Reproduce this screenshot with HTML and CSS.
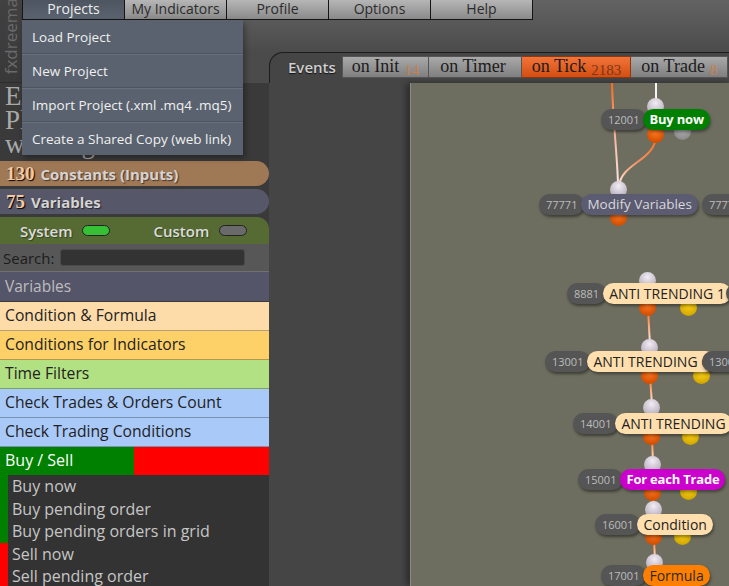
FILE: index.html
```html
<!DOCTYPE html>
<html>
<head>
<meta charset="utf-8">
<link rel="stylesheet" href="styles.css">
</head>
<body>
<div class="app">
  <header class="top">
    <div class="logo"><span>fxdreema</span></div>
    <div class="top-main">
      <nav class="menubar">
        <div class="menu active">Projects</div>
        <div class="menu">My Indicators</div>
        <div class="menu">Profile</div>
        <div class="menu">Options</div>
        <div class="menu">Help</div>
      </nav>
      <div class="tabs">
        <span class="tabs-label">Events</span>
        <div class="tab t-init">on Init<span class="cnt">14</span></div>
        <div class="tab t-timer">on Timer</div>
        <div class="tab tick">on Tick<span class="cnt">2183</span></div>
        <div class="tab t-trade">on Trade<span class="cnt">8</span></div>
      </div>
    </div>
  </header>

  <div class="body">
    <aside class="sidebar">
      <div class="title">Expert Advisor<br>Platform<br>working</div>
      <div class="pill constants"><span class="num">130</span>Constants (Inputs)</div>
      <div class="pill variables"><span class="num">75</span>Variables</div>
      <div class="filter">
        <span class="flabel">System</span><span class="toggle on"></span>
        <span class="flabel custom">Custom</span><span class="toggle"></span>
      </div>
      <div class="search"><span>Search:</span><div class="input"></div></div>
      <div class="section-head">Variables</div>
      <div class="cat c-formula">Condition &amp; Formula</div>
      <div class="cat c-ind">Conditions for Indicators</div>
      <div class="cat c-time">Time Filters</div>
      <div class="cat c-check">Check Trades &amp; Orders Count</div>
      <div class="cat c-check">Check Trading Conditions</div>
      <div class="buysell"><span class="bs-buy">Buy / Sell</span><span class="bs-sell"></span></div>
      <ul class="blocks">
        <li class="buy">Buy now</li>
        <li class="buy">Buy pending order</li>
        <li class="buy">Buy pending orders in grid</li>
        <li class="sell">Sell now</li>
        <li class="sell">Sell pending order</li>
      </ul>
    </aside>

    <main class="workspace">
      <div class="canvas">
        <svg class="links" width="330" height="510" viewBox="0 0 330 510">
          <defs>
            <linearGradient id="g0" gradientUnits="userSpaceOnUse" x1="0" y1="0" x2="0" y2="104"><stop offset="0" stop-color="#ff6a10"/><stop offset="0.35" stop-color="#f7a080"/><stop offset="1" stop-color="#fbecef"/></linearGradient>
            <linearGradient id="g1" gradientUnits="userSpaceOnUse" x1="0" y1="52" x2="0" y2="104"><stop offset="0" stop-color="#ff6a10"/><stop offset="0.5" stop-color="#f59060"/><stop offset="1" stop-color="#fff4f0"/></linearGradient>
            <linearGradient id="g2" gradientUnits="userSpaceOnUse" x1="0" y1="226" x2="0" y2="262"><stop offset="0" stop-color="#ff6a10"/><stop offset="1" stop-color="#fff4f0"/></linearGradient>
            <linearGradient id="g3" gradientUnits="userSpaceOnUse" x1="0" y1="293" x2="0" y2="322"><stop offset="0" stop-color="#ff6a10"/><stop offset="1" stop-color="#fff4f0"/></linearGradient>
            <linearGradient id="g4" gradientUnits="userSpaceOnUse" x1="0" y1="355" x2="0" y2="380"><stop offset="0" stop-color="#ff6a10"/><stop offset="1" stop-color="#fff4f0"/></linearGradient>
            <linearGradient id="g5" gradientUnits="userSpaceOnUse" x1="0" y1="411" x2="0" y2="425"><stop offset="0" stop-color="#ff6a10"/><stop offset="1" stop-color="#fff4f0"/></linearGradient>
            <linearGradient id="g6" gradientUnits="userSpaceOnUse" x1="0" y1="455" x2="0" y2="478"><stop offset="0" stop-color="#ff6a10"/><stop offset="1" stop-color="#fff4f0"/></linearGradient>
          </defs>
          <path d="M245 0 L245 22" stroke="#f6f2f6" stroke-width="2" fill="none"/>
          <path d="M201 0 C202 40 207 80 207 104" stroke="url(#g0)" stroke-width="2" fill="none"/>
          <path d="M245 52 C245 78 209 80 208 104" stroke="url(#g1)" stroke-width="2" fill="none"/>
          <path d="M237 226 L239 262" stroke="url(#g2)" stroke-width="2" fill="none"/>
          <path d="M239 293 L241 322" stroke="url(#g3)" stroke-width="2" fill="none"/>
          <path d="M241 355 L242 380" stroke="url(#g4)" stroke-width="2" fill="none"/>
          <path d="M242 411 L243 425" stroke="url(#g5)" stroke-width="2" fill="none"/>
          <path d="M243 455 L244 478" stroke="url(#g6)" stroke-width="2" fill="none"/>
        </svg>

        <span class="port in" style="left:236px;top:15px"></span>
        <span class="port out" style="left:236px;top:43px"></span>
        <span class="port gray" style="left:263px;top:40px"></span>

        <span class="port in" style="left:199px;top:98px"></span>
        <span class="port out" style="left:199px;top:126px"></span>

        <span class="port in" style="left:228px;top:189px"></span>
        <span class="port out" style="left:228px;top:216px"></span>
        <span class="port yes" style="left:269px;top:216px"></span>

        <span class="port in" style="left:230px;top:256px"></span>
        <span class="port out" style="left:230px;top:284px"></span>
        <span class="port yes" style="left:282px;top:284px"></span>

        <span class="port in" style="left:232px;top:316px"></span>
        <span class="port out" style="left:232px;top:345px"></span>
        <span class="port yes" style="left:271px;top:345px"></span>

        <span class="port in" style="left:233px;top:373px"></span>
        <span class="port out" style="left:233px;top:401px"></span>
        <span class="port yes" style="left:269px;top:400px"></span>

        <span class="port in" style="left:234px;top:418px"></span>
        <span class="port out" style="left:234px;top:445px"></span>
        <span class="port yes" style="left:263px;top:445px"></span>

        <span class="port in" style="left:235px;top:471px"></span>

        <div class="node" style="left:190px;top:26px"><span class="nid">12001</span><span class="nlabel l-buy">Buy now</span></div>
        <div class="node" style="left:128px;top:111px"><span class="nid">77771</span><span class="nlabel l-mod">Modify Variables</span></div>
        <div class="node" style="left:291px;top:111px"><span class="nid">77772</span><span class="nlabel l-mod">Modify Variables</span></div>
        <div class="node" style="left:156px;top:200px"><span class="nid">8881</span><span class="nlabel l-cond">ANTI TRENDING 1</span></div>
        <div class="node" style="left:315px;top:200px"><span class="nid">8882</span><span class="nlabel l-cond">ANTI TRENDING 2</span></div>
        <div class="node" style="left:134px;top:268px"><span class="nid">13001</span><span class="nlabel l-cond">ANTI TRENDING C</span></div>
        <div class="node" style="left:291px;top:268px"><span class="nid">13002</span><span class="nlabel l-cond">ANTI TRENDING</span></div>
        <div class="node" style="left:162px;top:330px"><span class="nid">14001</span><span class="nlabel l-cond">ANTI TRENDING</span></div>
        <div class="node" style="left:167px;top:386px"><span class="nid">15001</span><span class="nlabel l-each">For each Trade</span></div>
        <div class="node" style="left:184px;top:431px"><span class="nid">16001</span><span class="nlabel l-cond">Condition</span></div>
        <div class="node" style="left:190px;top:482px"><span class="nid">17001</span><span class="nlabel l-form">Formula</span></div>
      </div>
    </main>
  </div>

  <div class="dropdown">
    <div class="dd-item">Load Project</div>
    <div class="dd-item">New Project</div>
    <div class="dd-item">Import Project (.xml .mq4 .mq5)</div>
    <div class="dd-item">Create a Shared Copy (web link)</div>
  </div>
</div>
</body>
</html>
```
FILE: styles.css
```css
* { box-sizing: border-box; margin: 0; padding: 0; }
html, body { width: 729px; height: 586px; overflow: hidden; }
body { background: #454545; font-family: "Open Sans", "Noto Sans", sans-serif; }
.app { position: relative; width: 729px; height: 586px; overflow: hidden; }

/* header */
.top { display: flex; height: 83px; }
.logo { width: 22px; flex-shrink: 0; background: linear-gradient(#414141, #393939); border-bottom: 1px solid #2c2c2c; display: flex; align-items: flex-end; justify-content: center; overflow: hidden; }
.logo span { writing-mode: vertical-rl; transform: rotate(180deg); font-size: 17px; color: #6a6a6a; line-height: 22px; padding-top: 8px; white-space: nowrap; }
.top-main { flex: 1; min-width: 0; overflow: hidden; background: linear-gradient(#636363, #4b4b4b 52px, #4b4b4b); display: flex; flex-direction: column; }
.menubar { display: flex; height: 20px; flex-shrink: 0; }
.menu { width: 102px; flex-shrink: 0; height: 20px; border-right: 1px solid #151515; border-bottom: 1px solid #151515; background: linear-gradient(#b6b6b6, #8a8a8a); color: #2b2b2b; font-size: 14px; line-height: 18px; text-align: center; }
.menu.active { width: 103px; border-left: 1px solid #151515; background: linear-gradient(#4d5561, #5a636f); color: #eeeeee; }

.tabs { margin: 32px 0 0 247px; height: 31px; flex-shrink: 0; border-top: 1px solid #1c1c1c; border-left: 1px solid #1c1c1c; border-top-left-radius: 14px; background: #454545; display: flex; align-items: flex-start; padding: 3px 0 0 18px; }
.tabs-label { font-size: 15px; font-weight: 600; color: #cfcfcf; line-height: 22px; margin-right: 6px; text-shadow: 0 1px 1px #111; white-space: nowrap; }
.tab { height: 22px; flex-shrink: 0; border: 1px solid #555; border-left: 0; background: linear-gradient(#a9a9a9, #7f7f7f); font-family: "Liberation Serif", serif; font-size: 18px; color: #1c1c1c; line-height: 19px; padding: 0 10px; white-space: nowrap; display: flex; align-items: flex-start; }
.t-init { border-left: 1px solid #555; padding: 0 9px 0 9px; }
.t-timer { padding: 0 15px 0 11px; }
.t-trade { padding: 0 10px 0 10px; }
.tab.tick { background: linear-gradient(#f2743a, #d44e12); border-color: #8a3a10; padding: 0 9px 0 10px; }
.cnt { font-size: 15px; color: #c8804e; margin-left: 5px; margin-top: 4px; }
.tick .cnt { color: #7e361a; }

/* body */
.body { display: flex; height: 503px; }
.sidebar { width: 269px; flex-shrink: 0; display: flex; flex-direction: column; background: #3a3a3a; overflow: hidden; }
.sidebar > * { flex-shrink: 0; }
.title { height: 78px; font-family: "Liberation Serif", serif; font-size: 27px; line-height: 24px; color: #a9a9a9; padding: 1px 0 0 5px; overflow: hidden; white-space: nowrap; }
.pill { height: 25px; margin-bottom: 3px; border-radius: 0 13px 13px 0; display: flex; align-items: center; font-weight: 700; font-size: 15px; color: #d4d4d4; text-shadow: 1px 1px 1px rgba(0,0,0,.55); }
.pill .num { font-family: "Liberation Serif", serif; font-size: 19px; color: #f3c9a2; margin: 0 6px 0 6px; text-shadow: 1px 1px 1px #000; }
.constants { background: #9f7856; }
.variables { background: #57576a; }
.filter { height: 27px; background: #566b33; border-radius: 0 12px 0 0; display: flex; align-items: center; font-size: 15px; font-weight: 600; color: #dcdcdc; padding-left: 20px; text-shadow: 1px 1px 1px rgba(0,0,0,.4); }
.toggle { width: 28px; height: 11px; border-radius: 6px; border: 1px solid #222; background: #6a6a6a; margin-left: 10px; }
.toggle.on { background: #35c035; }
.flabel.custom { margin-left: 43px; }
.search { height: 28px; background: #575757; border-bottom: 1px solid #707070; display: flex; align-items: center; padding-left: 3px; font-size: 15px; color: #1c1c1c; }
.search .input { width: 185px; height: 17px; margin-left: 6px; background: #333; border: 1px solid #4a4a4a; border-radius: 3px; }
.section-head { height: 30px; background: #55556a; border-bottom: 1px solid #3a3a3a; color: #bdbdbd; font-size: 15.5px; line-height: 28px; padding-left: 5px; }
.cat { height: 29px; border-bottom: 1px solid rgba(0,0,0,.28); color: #222; font-size: 15.7px; line-height: 27px; padding-left: 5px; white-space: nowrap; }
.c-formula { background: #fedcaa; }
.c-ind { background: #fed168; }
.c-time { background: #b2e183; }
.c-check { background: #a9c9f9; }
.buysell { height: 28px; display: flex; }
.bs-buy { width: 134px; background: #008000; color: #fff; font-size: 16px; line-height: 27px; padding-left: 5px; }
.bs-sell { flex: 1; background: #ff0000; }
.blocks { list-style: none; flex: 1 1 auto; min-height: 0; background: #333; overflow: hidden; }
.blocks li { height: 22.6px; line-height: 23px; font-size: 16px; color: #c6c6c6; padding-left: 4px; border-left: 8px solid #008000; white-space: nowrap; }
.blocks li.sell { border-left-color: #ff0000; }

/* canvas */
.workspace { flex: 1; min-width: 0; position: relative; background: #454545; }
.canvas { position: absolute; left: 141px; top: 0; right: 0; bottom: 0; background: #6d6e5f; border-left: 1px solid #8c8c80; box-shadow: -4px 0 6px rgba(0,0,0,.35); overflow: hidden; }
.links { position: absolute; left: 0; top: 0; }
.port { position: absolute; width: 17px; height: 17px; border-radius: 50%; }
.port.in { background: radial-gradient(circle at 50% 30%, #f2ecf4, #b9b0bf 75%); }
.port.out { background: radial-gradient(circle at 50% 35%, #ff7a24, #d24e00 75%); }
.port.yes { background: radial-gradient(circle at 50% 35%, #ffd418, #d2a800 75%); }
.port.gray { background: radial-gradient(circle at 50% 35%, #b4b4b4, #8c8c8c 75%); }
.node { position: absolute; display: flex; height: 21px; white-space: nowrap; }
.nid { height: 21px; background: #555555; border-radius: 11px; padding: 0 7px 0 7px; font-size: 11px; color: #bcbcbc; line-height: 21px; box-shadow: 1px 2px 3px rgba(0,0,0,.45); }
.nlabel { height: 21px; margin-left: -3px; border-radius: 11px; padding: 0 6px; font-size: 14px; line-height: 21px; color: #222; box-shadow: 1px 2px 3px rgba(0,0,0,.4); }
.l-buy { background: #008000; color: #fff; font-weight: 700; font-size: 13px; letter-spacing: -0.2px; }
.l-mod { background: #5b5b72; color: #d8d8d8; font-size: 13.5px; }
.l-cond { background: #ffdfae; }
.l-each { background: #cc00cc; color: #fff; font-weight: 700; font-size: 13px; letter-spacing: -0.2px; }
.l-form { background: #ff8000; color: #2a2a2a; }

/* dropdown */
.dropdown { position: absolute; left: 22px; top: 20px; width: 221px; height: 135px; background: #59626e; display: flex; flex-direction: column; box-shadow: 2px 3px 6px rgba(0,0,0,.35); }
.dd-item { flex: 1; display: flex; align-items: center; padding-left: 10px; font-size: 13.5px; color: #f0f0f0; white-space: nowrap; }
.dd-item + .dd-item { border-top: 1px solid #4c5460; box-shadow: inset 0 1px 0 #67707b; }
```
